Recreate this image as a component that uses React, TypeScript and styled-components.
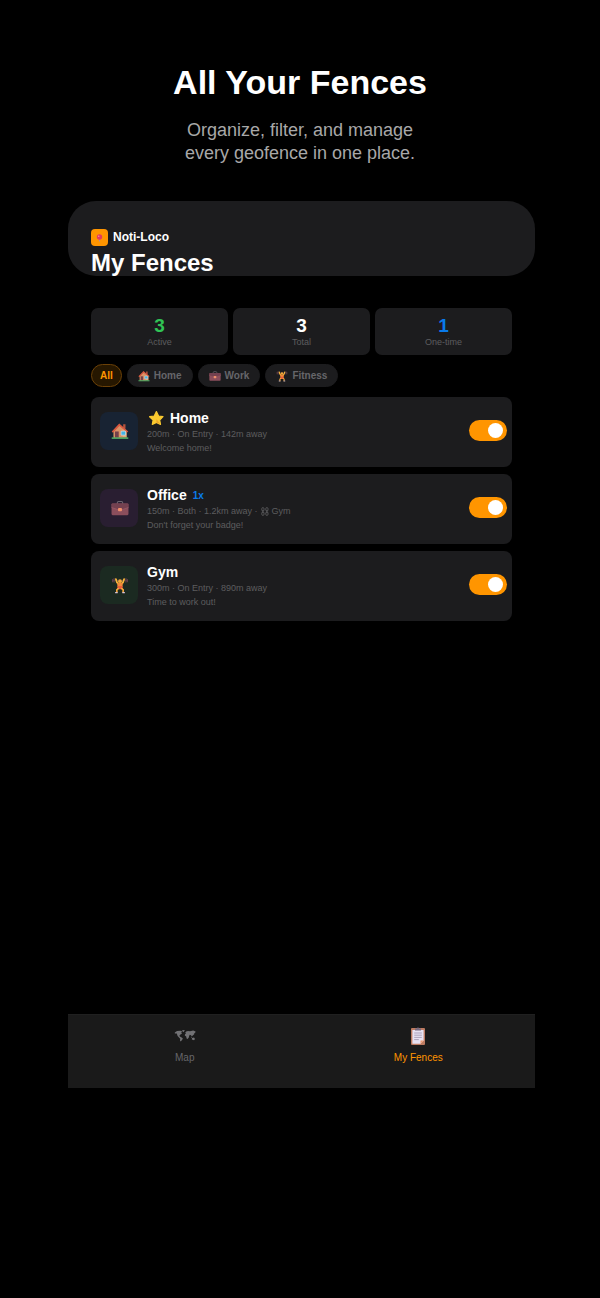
import React from "react";
import styled, { createGlobalStyle } from "styled-components";

const GlobalStyle = createGlobalStyle`
  *, *::before, *::after { box-sizing: border-box; }
  body {
    margin: 0;
    background: #000;
    color: #fff;
    font-family: "Liberation Sans", Arial, sans-serif;
  }
  h1, h2, h3, p, ul, dl, dd { margin: 0; padding: 0; }
  button { font-family: inherit; }
`;

const muted = "#5c5c5f";
const surface = "#1c1c1e";
const orange = "#ff9500";

const Page = styled.div`
  min-height: 100vh;
  display: flex;
  flex-direction: column;
  padding: 60px 65px 210px 68px;
`;

const Intro = styled.header`
  text-align: center;
  padding-bottom: 36px;
  margin-right: 3px;
`;

const Headline = styled.h1`
  font-size: 34px;
  line-height: 44px;
`;

const Tagline = styled.p`
  margin-top: 15px;
  font-size: 18px;
  line-height: 23px;
  color: #a8a8a8;
`;

const Screen = styled.main`
  flex: 1;
  display: flex;
  flex-direction: column;
`;

const TopBar = styled.div`
  overflow: hidden;
  padding: 28px 23px 0;
  border-radius: 28px;
  background: ${surface};
`;

const Brand = styled.div`
  display: flex;
  align-items: center;
  gap: 5px;
  font-size: 12px;
  line-height: 17px;
  font-weight: 700;
`;

const BrandMark = styled.span`
  display: grid;
  place-items: center;
  width: 17px;
  height: 17px;
  border-radius: 4px;
  background: ${orange};
`;

const ScreenTitle = styled.h2`
  margin-top: 4px;
  font-size: 24px;
  line-height: 26px;
`;

const Content = styled.div`
  padding: 32px 23px;
`;

const Stats = styled.dl`
  display: grid;
  grid-template-columns: repeat(3, 1fr);
  gap: 5px;
`;

const Stat = styled.div`
  display: flex;
  flex-direction: column-reverse;
  padding: 8px 0 7px;
  border-radius: 7px;
  background: ${surface};
  text-align: center;
`;

const StatLabel = styled.dt`
  font-size: 9px;
  line-height: 12px;
  color: ${muted};
`;

const StatValue = styled.dd<{ $color: string }>`
  font-size: 19px;
  line-height: 20px;
  font-weight: 700;
  color: ${(p) => p.$color};
`;

const Chips = styled.div`
  display: flex;
  gap: 5px;
  padding: 9px 0 10px;
`;

const Chip = styled.button<{ $active?: boolean }>`
  display: flex;
  align-items: center;
  gap: 4px;
  height: 23px;
  padding: 0 ${(p) => (p.$active ? 8 : 10)}px;
  border: 1px solid ${(p) => (p.$active ? "#6b4107" : surface)};
  border-radius: 12px;
  background: ${(p) => (p.$active ? "#261700" : surface)};
  color: ${(p) => (p.$active ? orange : "#66666a")};
  font-size: 10px;
  font-weight: 700;
`;

const FenceList = styled.ul`
  display: flex;
  flex-direction: column;
  gap: 7px;
  list-style: none;
`;

const Fence = styled.li`
  display: flex;
  align-items: center;
  gap: 9px;
  padding: 9px 5px 12px 9px;
  border-radius: 8px;
  background: ${surface};
`;

const FenceIcon = styled.span<{ $tint: string }>`
  display: grid;
  place-items: center;
  flex: none;
  width: 38px;
  height: 38px;
  padding-left: 2px;
  border-radius: 8px;
  background: ${(p) => p.$tint};
`;

const FenceText = styled.div`
  flex: 1;
  min-width: 0;
  padding-top: 3px;
`;

const FenceName = styled.h3`
  display: flex;
  align-items: center;
  gap: 6px;
  font-size: 14px;
  line-height: 18px;
`;

const Once = styled.span`
  padding-top: 2px;
  font-size: 10px;
  line-height: 14px;
  color: #0a7aea;
`;

const Line = styled.p`
  display: flex;
  align-items: center;
  gap: 3px;
  font-size: 9px;
  line-height: 14px;
  color: ${muted};
`;

const Switch = styled.input`
  appearance: none;
  flex: none;
  display: flex;
  align-items: center;
  width: 38px;
  height: 21px;
  margin: 0;
  padding: 0 4px;
  border-radius: 11px;
  background: #3a3a3c;
  cursor: pointer;
  &::before {
    content: "";
    width: 15px;
    height: 15px;
    border-radius: 50%;
    background: #fff;
  }
  &:checked {
    justify-content: flex-end;
    background: ${orange};
  }
`;

const TabBar = styled.nav`
  display: grid;
  grid-template-columns: 1fr 1fr;
  margin-top: auto;
  padding: 11px 0 23px;
  background: #1a1a1a;
  border-top: 1px solid #202020;
`;

const Tab = styled.a<{ $active?: boolean }>`
  display: flex;
  flex-direction: column;
  align-items: center;
  gap: 5px;
  font-size: 10px;
  line-height: 14px;
  text-decoration: none;
  color: ${(p) => (p.$active ? orange : "#66666a")};
`;

type IconProps = { size: number };

const HouseIcon = ({ size }: IconProps) => (
  <svg width={size} height={size} viewBox="0 0 20 20" aria-hidden="true">
    <path d="M13.5 2.5h2.6v5h-2.6z" fill="#b5523c" />
    <path d="M3 10 10 3.2 17.5 10v7.5H3z" fill="#e3a878" />
    <path d="M3 10 10 3.2l3 3V17.5H3z" fill="#d99468" />
    <path d="M.8 10.6 9.2 1.8 19.2 10.6 17.8 11.8 9.4 4.4 2.2 11.9z" fill="#d9583f" />
    <path d="M4.4 10.5h4.2v7H4.4z" fill="#75404a" />
    <path d="M11.2 10.2h5v4.4h-5z" fill="#42b4e6" stroke="#d8e4e8" strokeWidth=".7" />
    <path d="M.8 17h18.4v1.8H.8z" fill="#51a861" />
  </svg>
);

const BriefcaseIcon = ({ size }: IconProps) => (
  <svg width={size} height={size} viewBox="0 0 20 20" aria-hidden="true">
    <path d="M7 5.500V4.200q0-1.400 1.400-1.400h3.200q1.400 0 1.400 1.400v1.300" fill="none" stroke="#6d6670" strokeWidth="1.200" />
    <rect x=".6" y="5" width="18.800" height="13" rx="1.200" fill="#8b4e5c" />
    <path d="M.6 6.200q0-1.200 1.200-1.200h16.400q1.200 0 1.200 1.200v3.200L10 12.600.6 9.400z" fill="#744150" />
    <path d="M.6 9.400 10 12.600l9.400-3.200" fill="none" stroke="#a1606a" strokeWidth=".7" />
    <rect x="7.800" y="10" width="4.400" height="3.600" rx="1" fill="#f0906c" />
  </svg>
);

const LifterIcon = ({ size }: IconProps) => (
  <svg width={size} height={size} viewBox="0 0 20 20" aria-hidden="true">
    <path d="M1.600 4.800h16.800" stroke="#5d4d58" strokeWidth=".8" />
    <path d="M1.800 3.800v2.600M3.400 2.800v4M16.600 2.800v4M18.200 3.800v2.600" stroke="#66404c" strokeWidth="1.200" strokeLinecap="round" />
    <path d="M5.400 3.400 6.600 7l1.800 1.800M14.600 3.400 13.400 7l-1.800 1.800" fill="none" stroke="#f7b53c" strokeWidth="2" strokeLinecap="round" strokeLinejoin="round" />
    <circle cx="10" cy="5.800" r="2.100" fill="#f5a93a" />
    <path d="M6.800 7.800h6.400l-.5 4.400H7.300z" fill="#f08a38" />
    <path d="M7.300 11.200h5.400l.5 3.600H6.800z" fill="#ea5f3c" />
    <path d="m8 14-1.600 1.400.2 2.400M12 14l1.600 1.400-.2 2.400" fill="none" stroke="#f5a93a" strokeWidth="1.800" strokeLinecap="round" strokeLinejoin="round" />
    <path d="M4.600 18.400h2.800M12.600 18.400h2.800" stroke="#d9c2d4" strokeWidth="1.400" />
  </svg>
);

const StarIcon = () => (
  <svg width="17" height="16" viewBox="0 0 17 16" aria-label="Favorite" role="img">
    <path
      d="M9.400 1.600 11.600 6l4.400.7-3.300 3.400.8 4.300-4.100-2-4.100 2 .8-4.300L2.600 6.700 7.200 6z"
      fill="#fac92f"
      stroke="#fac92f"
      strokeWidth="1.200"
      strokeLinejoin="round"
    />
    <path d="m9.400 9 4 5.200-4-1.800Z" fill="#eda528" />
  </svg>
);

const PinIcon = () => (
  <svg width="7" height="8" viewBox="0 0 7 8" aria-hidden="true">
    <path d="M3.500 4.500v3" stroke="#b08a96" strokeWidth="1" />
    <circle cx="3.500" cy="3" r="2.700" fill="#e23b5d" />
    <circle cx="2.700" cy="2.200" r=".8" fill="#f58aa0" />
  </svg>
);

const ChainIcon = () => (
  <svg width="8" height="9" viewBox="0 0 8 9" fill="none" stroke={muted} strokeWidth=".9" aria-label="Linked to" role="img">
    <rect x=".8" y=".6" width="2.200" height="3.400" rx="1.100" />
    <rect x=".8" y="5" width="2.200" height="3.400" rx="1.100" />
    <rect x="4.800" y=".6" width="2.200" height="3.400" rx="1.100" />
    <rect x="4.800" y="5" width="2.200" height="3.400" rx="1.100" />
    <path d="M1.900 3v3M5.900 3v3" />
  </svg>
);

const MapIcon = () => (
  <svg width="22" height="20" viewBox="0 0 22 20" fill="#717174" aria-hidden="true">
    <path d="M.8 6.400 3 5l3.400-.2 1.800.8-1 1.200.8 1-1.600.8-1 1.200.4.800 1.400.6 1.600 1-.4 1.400-1.600 1.800-.8-.6.200-2-1.200-1.400-1.400-1.400L2.800 7.400.8 7.600z" />
    <path d="m7.800 4.600 2.200-.6.800.6-1.400 1.600z" />
    <path d="m11.200 6.800 1-1.200 1.800-.6 2 .2 3.200-.6 2.400 1-.4 1.200-.8.200-.2 1.200-1.200 1-1.200 1.200-.8-1.200-1.200-.4-.6 1-.4 1.800-1.200 1.400-1-.6-.4-2-1.400-.8.200-1.400 1-.6z" />
    <path d="m18 12 2-.4 1 1.400-1 1.200-2.200-.8zM16.800 10.600l1.200.8-.6.600z" />
  </svg>
);

const ClipboardIcon = () => (
  <svg width="20" height="20" viewBox="0 0 20 20" aria-hidden="true">
    <rect x="3" y="2" width="14" height="17" rx="1" fill="#bd7b62" />
    <path d="M4.400 4h11.200v10.500L12.500 17.700H4.400z" fill="#e7e1f2" />
    <path d="M12.500 17.700v-3.200h3.100z" fill="#ef9a6d" />
    <path d="M7 4.500V2.400h1.700a1.400 1.400 0 0 1 2.600 0H13v2.100z" fill="#786b80" />
    <path d="M6.200 7h7.600M6.200 9.200h7.600M6.200 11.400h7.600M6.200 13.600h4.600" stroke="#a59bb5" strokeWidth=".9" />
  </svg>
);

const stats = [
  { label: "Active", value: 3, color: "#30c355" },
  { label: "Total", value: 3, color: "#fff" },
  { label: "One-time", value: 1, color: "#0a7aea" },
];

const filters = [
  { label: "Home", Icon: HouseIcon },
  { label: "Work", Icon: BriefcaseIcon },
  { label: "Fitness", Icon: LifterIcon },
];

const fences = [
  { name: "Home", starred: true, meta: "200m · On Entry · 142m away", message: "Welcome home!", tint: "#182333", Icon: HouseIcon },
  { name: "Office", once: true, meta: "150m · Both · 1.2km away ·", linked: "Gym", message: "Don't forget your badge!", tint: "#291e31", Icon: BriefcaseIcon },
  { name: "Gym", meta: "300m · On Entry · 890m away", message: "Time to work out!", tint: "#1b2a21", Icon: LifterIcon },
];

export default function App() {
  return (
    <>
      <GlobalStyle />
      <Page>
        <Intro>
          <Headline>All Your Fences</Headline>
          <Tagline>
            Organize, filter, and manage
            <br />
            every geofence in one place.
          </Tagline>
        </Intro>
        <Screen>
          <TopBar>
            <Brand>
              <BrandMark>
                <PinIcon />
              </BrandMark>
              Noti-Loco
            </Brand>
            <ScreenTitle>My Fences</ScreenTitle>
          </TopBar>
          <Content>
            <Stats>
              {stats.map((s) => (
                <Stat key={s.label}>
                  <StatLabel>{s.label}</StatLabel>
                  <StatValue $color={s.color}>{s.value}</StatValue>
                </Stat>
              ))}
            </Stats>
            <Chips>
              <Chip type="button" $active aria-pressed="true">
                All
              </Chip>
              {filters.map(({ label, Icon }) => (
                <Chip key={label} type="button" aria-pressed="false">
                  <Icon size={12} />
                  {label}
                </Chip>
              ))}
            </Chips>
            <FenceList>
              {fences.map(({ name, starred, once, meta, linked, message, tint, Icon }) => (
                <Fence key={name}>
                  <FenceIcon $tint={tint}>
                    <Icon size={18} />
                  </FenceIcon>
                  <FenceText>
                    <FenceName>
                      {starred && <StarIcon />}
                      {name}
                      {once && <Once>1x</Once>}
                    </FenceName>
                    <Line>
                      {meta}
                      {linked && (
                        <>
                          <ChainIcon />
                          {linked}
                        </>
                      )}
                    </Line>
                    <Line>{message}</Line>
                  </FenceText>
                  <Switch type="checkbox" role="switch" defaultChecked aria-label={`${name} fence enabled`} />
                </Fence>
              ))}
            </FenceList>
          </Content>
          <TabBar>
            <Tab href="#map">
              <MapIcon />
              Map
            </Tab>
            <Tab href="#fences" $active aria-current="page">
              <ClipboardIcon />
              My Fences
            </Tab>
          </TabBar>
        </Screen>
      </Page>
    </>
  );
}
